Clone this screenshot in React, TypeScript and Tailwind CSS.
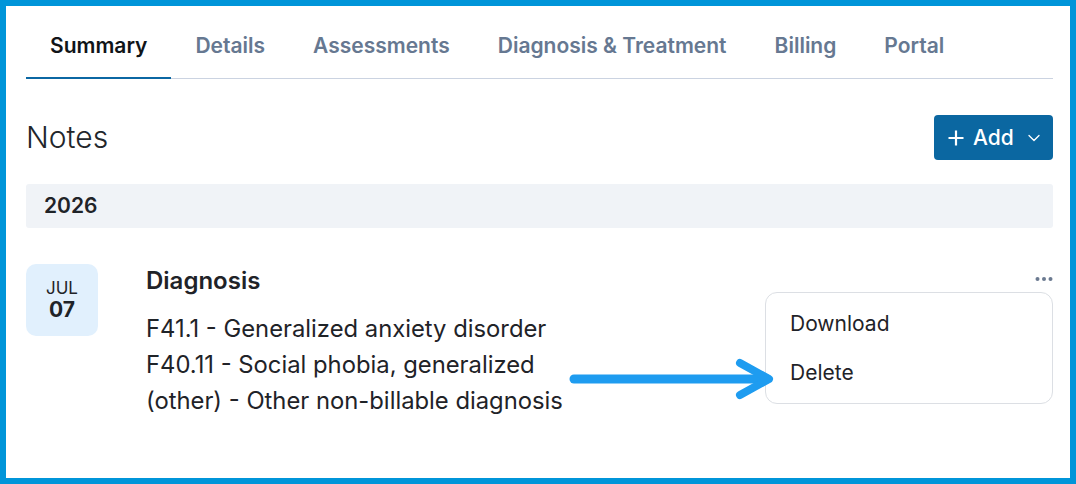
import { ChevronDown } from 'lucide-react';

const tabs = ['Summary', 'Details', 'Assessments', 'Diagnosis & Treatment', 'Billing', 'Portal'];

export default function App() {
  return (
    <div
      className="relative w-[1076px] h-[484px] border-[6px] border-[#0095d9] bg-white text-[#1f2328] overflow-hidden"
      style={{ fontFamily: 'Inter, "Noto Sans", sans-serif' }}
    >
      <div className="pl-[20px] pr-[17px]">
        {/* Tabs */}
        <div className="flex border-b border-[#cbd3e1]">
          {tabs.map((t, i) => (
            <div
              key={t}
              className={
                i === 0
                  ? 'px-6 pt-[26px] pb-[17px] leading-7 text-[21px] font-semibold text-[#101418] border-b-2 border-[#0b67a3] -mb-px'
                  : 'px-6 pt-[26px] pb-[17px] leading-7 text-[21px] font-semibold text-[#667891] border-b-2 border-transparent -mb-px'
              }
            >
              {t}
            </div>
          ))}
        </div>

        {/* Notes header */}
        <div className="flex items-center justify-between mt-[36px]">
          <h2 className="text-[30px] font-light text-[#22262b]">Notes</h2>
          <button className="flex items-center h-[45px] w-[119px] pl-[14px] rounded-[4px] bg-[#0b67a1] text-white">
            <svg width="16" height="16" viewBox="0 0 16 16" className="mr-[9px]">
              <path d="M8 0.5v15M0.5 8h15" stroke="white" strokeWidth="2.2" />
            </svg>
            <span className="text-[21px] font-medium leading-none">Add</span>
            <ChevronDown size={20} strokeWidth={1.6} className="ml-[10px]" />
          </button>
        </div>

        {/* Year bar */}
        <div className="mt-6 h-[44px] flex items-center pl-[18px] rounded-[3px] bg-[#f0f3f7]">
          <span className="text-[21px] font-semibold text-[#1f2328]">2026</span>
        </div>

        {/* Note row */}
        <div className="mt-9 flex">
          <div className="w-[72px] h-[72px] shrink-0 rounded-[10px] bg-[#e1f0fd] flex flex-col items-center justify-center">
            <span className="text-[17px] leading-5 text-[#1f2328]">JUL</span>
            <span className="text-[21px] leading-6 font-bold text-[#1f2328]">07</span>
          </div>
          <div className="ml-12 pt-[3px]">
            <div className="text-[24px] leading-7 font-semibold text-[#1f2328]">Diagnosis</div>
            <div className="mt-4 text-[23.8px] leading-[36px] text-[#1f2328]">
              <div>F41.1 - Generalized anxiety disorder</div>
              <div>F40.11 - Social phobia, generalized</div>
              <div>(other) - Other non-billable diagnosis</div>
            </div>
          </div>
          <div className="ml-auto relative pt-[12px]">
            <svg width="18" height="6" viewBox="0 0 18 6" className="block">
              <circle cx="2.5" cy="3" r="2" fill="#6b7a90" />
              <circle cx="9" cy="3" r="2" fill="#6b7a90" />
              <circle cx="15.5" cy="3" r="2" fill="#6b7a90" />
            </svg>
            {/* Dropdown menu */}
            <div className="absolute right-0 top-[28px] w-[288px] py-[6px] rounded-[12px] border border-[#dcdfe4] bg-white">
              <div className="h-[49px] flex items-center px-6 text-[21px] text-[#1f2328]">Download</div>
              <div className="h-[49px] flex items-center px-6 text-[21px] text-[#1f2328]">Delete</div>
            </div>
          </div>
        </div>
      </div>

      {/* Annotation arrow */}
      <svg
        width="212"
        height="48"
        viewBox="0 0 212 48"
        className="absolute left-[557px] top-[349px]"
      >
        <path d="M11 24H204" stroke="#1e9cf0" strokeWidth="9" strokeLinecap="round" />
        <path
          d="M177 8L206 24L177 40"
          fill="none"
          stroke="#1e9cf0"
          strokeWidth="8"
          strokeLinecap="round"
          strokeLinejoin="round"
        />
      </svg>
    </div>
  );
}
